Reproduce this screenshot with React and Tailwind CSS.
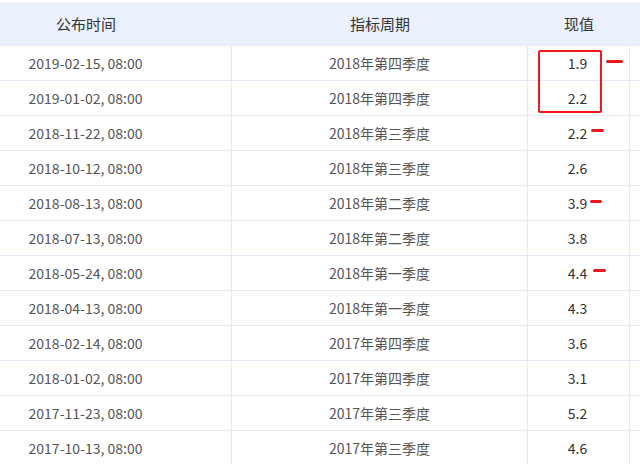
import React from 'react';

const ROWS = [
  ['2019-02-15, 08:00', '2018年第四季度', '1.9'],
  ['2019-01-02, 08:00', '2018年第四季度', '2.2'],
  ['2018-11-22, 08:00', '2018年第三季度', '2.2'],
  ['2018-10-12, 08:00', '2018年第三季度', '2.6'],
  ['2018-08-13, 08:00', '2018年第二季度', '3.9'],
  ['2018-07-13, 08:00', '2018年第二季度', '3.8'],
  ['2018-05-24, 08:00', '2018年第一季度', '4.4'],
  ['2018-04-13, 08:00', '2018年第一季度', '4.3'],
  ['2018-02-14, 08:00', '2017年第四季度', '3.6'],
  ['2018-01-02, 08:00', '2017年第四季度', '3.1'],
  ['2017-11-23, 08:00', '2017年第三季度', '5.2'],
  ['2017-10-13, 08:00', '2017年第三季度', '4.6'],
];

// red dash marks drawn over the table: [left, top, width]
const DASHES = [
  [606, 60, 17],
  [591, 129, 13],
  [590, 200, 12],
  [593, 269, 13],
];

export default function App() {
  return (
    <div
      className="relative w-[640px] h-[466px] overflow-hidden bg-white pt-[3px] text-[14px] text-[#555]"
      style={{ fontFamily: '"Noto Sans CJK SC", "Noto Sans", sans-serif' }}
    >
      <div className="grid grid-cols-[232px_296px_102px_10px] h-[42px] items-center bg-[#eaf1fc] border-t border-[#dfe6f5] text-[15px] text-[#333]">
        <div className="text-center pr-[60px]">公布时间</div>
        <div className="text-center">指标周期</div>
        <div className="text-center">现值</div>
        <div />
      </div>
      {ROWS.map((r, i) => (
        <div
          key={i}
          className="grid grid-cols-[232px_296px_102px_10px] h-[35px] items-center border-t border-[#e3e9f6]"
        >
          <div className="h-full flex items-center justify-center pr-[60px] border-r border-[#e3e9f6]">{r[0]}</div>
          <div className="h-full flex items-center justify-center border-r border-[#e3e9f6]">{r[1]}</div>
          <div className="h-full flex items-center justify-center border-r border-[#e3e9f6] pr-[2px] text-[#333]">{r[2]}</div>
          <div />
        </div>
      ))}
      <div className="absolute left-[538px] top-[50px] w-[64px] h-[63px] border-2 border-[#f01818] rounded-[2px]" />
      {DASHES.map(([l, t, w], i) => (
        <div
          key={i}
          className="absolute h-[3px] bg-[#f01818] rounded-full"
          style={{ left: l, top: t, width: w }}
        />
      ))}
    </div>
  );
}
